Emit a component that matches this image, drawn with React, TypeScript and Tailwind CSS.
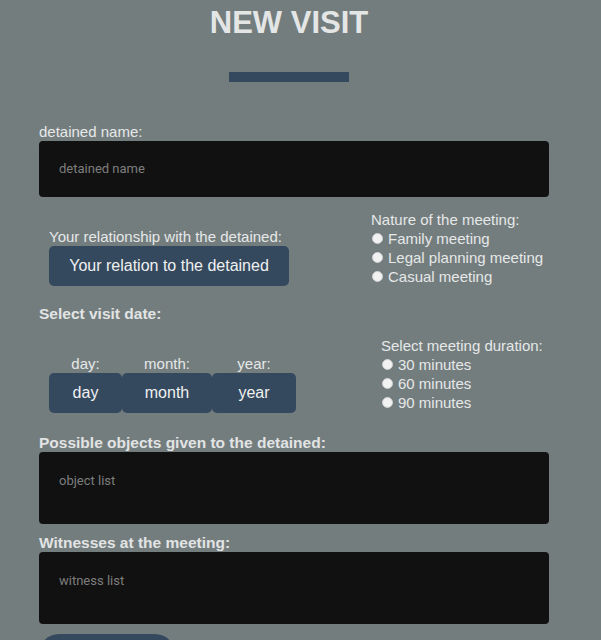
import React from "react";

function Radio({ label }: { label: string }) {
  return (
    <label className="flex items-center h-[19px] leading-[19px]">
      <span className="ml-[1px] w-[11px] h-[11px] rounded-full bg-[#f2f2f2] border border-[#d0d0d0] mr-[5px] shrink-0" />
      <span>{label}</span>
    </label>
  );
}

export default function App() {
  return (
    <div className="min-h-screen bg-[#737d7e] font-['Liberation_Sans',Arial,sans-serif] text-[#e6e8e8] overflow-hidden">
      <div className="w-[578px]">
        <h1 className="pt-[3px] text-center text-[31px] leading-[40px] font-bold text-[#e4e6e6]">NEW VISIT</h1>
        <div className="mx-auto mt-[29px] w-[120px] h-[10px] bg-[#34495e]" />

        <div className="pl-[39px] pt-[41px]">
          <div className="text-[15px] leading-[18px]">detained name:</div>
          <div className="w-[510px] h-[56px] bg-[#111111] rounded-[4px] flex items-center px-[20px] text-[13px] text-[#7e7e7e] font-['Roboto',Arial,sans-serif]">
            detained name
          </div>

          <div className="mt-[13px] flex items-end text-[15px]">
            <div className="ml-[10px] w-[322px]">
              <div className="leading-[19px]">Your relationship with the detained:</div>
              <div className="w-[240px] h-[40px] rounded-[5px] bg-[#34495e] flex items-center justify-center text-[16px] text-[#f0f0f0]">
                Your relation to the detained
              </div>
            </div>
            <div className="flex flex-col">
              <div className="leading-[19px]">Nature of the meeting:</div>
              <Radio label="Family meeting" />
              <Radio label="Legal planning meeting" />
              <Radio label="Casual meeting" />
            </div>
          </div>

          <div className="mt-[18px] text-[15.5px] font-bold leading-[19px] text-[#e2e4e4]">Select visit date:</div>

          <div className="mt-[13px] flex items-end text-[15px]">
            <div className="ml-[10px] w-[332px] flex">
              <div className="flex flex-col items-center w-[73px]">
                <div className="leading-[19px]">day:</div>
                <div className="w-[73px] h-[40px] rounded-[5px] bg-[#34495e] flex items-center justify-center text-[16px] text-[#f0f0f0]">day</div>
              </div>
              <div className="flex flex-col items-center w-[90px]">
                <div className="leading-[19px]">month:</div>
                <div className="w-[90px] h-[40px] rounded-[5px] bg-[#34495e] flex items-center justify-center text-[16px] text-[#f0f0f0]">month</div>
              </div>
              <div className="flex flex-col items-center w-[84px]">
                <div className="leading-[19px]">year:</div>
                <div className="w-[84px] h-[40px] rounded-[5px] bg-[#34495e] flex items-center justify-center text-[16px] text-[#f0f0f0]">year</div>
              </div>
            </div>
            <div className="flex flex-col mb-[1px]">
              <div className="leading-[19px]">Select meeting duration:</div>
              <Radio label="30 minutes" />
              <Radio label="60 minutes" />
              <Radio label="90 minutes" />
            </div>
          </div>

          <div className="mt-[20px] text-[15.5px] font-bold leading-[19px] text-[#e2e4e4]">Possible objects given to the detained:</div>
          <div className="w-[510px] h-[72px] bg-[#111111] rounded-[4px] px-[20px] pt-[21px] text-[13px] leading-[15px] text-[#7e7e7e] font-['Roboto',Arial,sans-serif]">
            object list
          </div>

          <div className="mt-[9px] text-[15.5px] font-bold leading-[19px] text-[#e2e4e4]">Witnesses at the meeting:</div>
          <div className="w-[510px] h-[72px] bg-[#111111] rounded-[4px] px-[20px] pt-[21px] text-[13px] leading-[15px] text-[#7e7e7e] font-['Roboto',Arial,sans-serif]">
            witness list
          </div>

          <button aria-label="Submit" className="mt-[10px] w-[136px] h-[40px] rounded-[20px] bg-[#34495e]" />
        </div>
      </div>
    </div>
  );
}
